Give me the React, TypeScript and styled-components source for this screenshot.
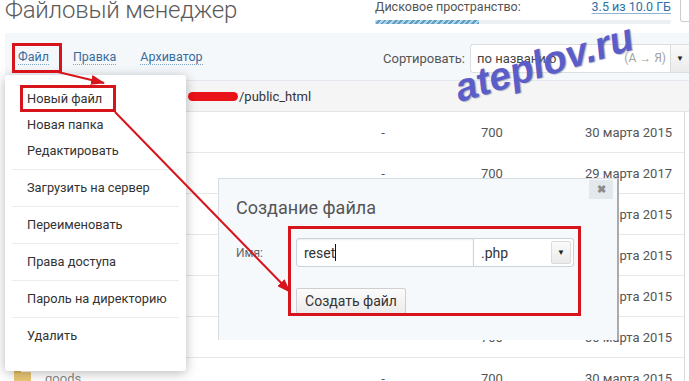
import React from 'react';
import styled, {createGlobalStyle} from 'styled-components';

const GlobalStyle = createGlobalStyle`
  html, body {
    margin: 0;
    padding: 0;
    background: #fff;
    overflow: hidden;
  }
  body {
    font-family: Roboto, 'Open Sans', 'Liberation Sans', sans-serif;
    color: #555;
  }
`;

const Page = styled.div`
  position: relative;
  width: 689px;
  height: 381px;
  padding-left: 5px;
  box-sizing: border-box;
  overflow: hidden;
`;

/* ---------- header ---------- */

const Header = styled.header`
  display: grid;
  grid-template-columns: 370px 296px 1fr;
  height: 33px;
`;

const Title = styled.h1`
  margin: 0;
  font-weight: 300;
  font-size: 24px;
  line-height: 20px;
  letter-spacing: -0.2px;
  color: #5a5a5a;
  white-space: nowrap;
`;

const Disk = styled.div`
  display: flex;
  flex-direction: column;
`;

const DiskLine = styled.div`
  display: flex;
  justify-content: space-between;
  font-size: 12.5px;
  line-height: 13px;
  color: #555;
`;

const DiskLink = styled.a`
  color: #2f6fa7;
  text-decoration: underline;
  text-underline-offset: 2px;
  text-decoration-color: #8fb3d3;
`;

const Bar = styled.div`
  margin-top: 7px;
  height: 4px;
  background: #edf0f2;
  border-radius: 2px;
  overflow: hidden;
`;

const BarFill = styled.div`
  height: 100%;
  background: repeating-linear-gradient(-45deg, #5f9fc6 0 2px, #b3d3e6 2px 4px);
`;

const SideBtn = styled.div`
  margin-left: 9px;
  width: 20px;
  height: 21px;
  border: 1px solid #ccc;
  border-top: none;
  border-radius: 0 0 3px 3px;
`;

/* ---------- toolbar ---------- */

const Toolbar = styled.nav`
  display: flex;
  align-items: center;
  gap: 24px;
  height: 47px;
  padding-left: 13px;
  background: #f4f8fb;
  border-bottom: 1px solid #e2e8ee;
`;

const MenuLink = styled.a`
  color: #3a6c9b;
  font-size: 12.5px;
  line-height: 15px;
  text-decoration: none;
  border-bottom: 1px dotted #7fa2c2;
`;

const SortWrap = styled.div`
  margin-left: auto;
  display: flex;
  align-items: center;
  gap: 5px;
  margin-top: 3px;
`;

const SortLabel = styled.span`
  font-size: 13px;
  color: #555;
`;

const SortSelect = styled.div`
  display: flex;
  align-items: center;
  width: 219px;
  height: 29px;
  box-sizing: border-box;
  padding-left: 6px;
  background: #fff;
  border: 1px solid #dcdfe2;
  border-right: none;
  border-radius: 3px 0 0 3px;
  font-size: 13px;
  color: #444;
`;

const SortHint = styled.span`
  margin-left: auto;
  margin-right: 4px;
  font-size: 12px;
  color: #a3a3a3;
`;

const CaretBtn = styled.span<{small?: boolean}>`
  display: flex;
  align-items: center;
  justify-content: center;
  width: 18px;
  height: ${({small}) => (small ? '21px' : '27px')};
  background: linear-gradient(#fafafa, #ebebeb);
  border-left: 1px solid #dcdcdc;
  border-radius: ${({small}) => (small ? '2px' : '0')};
  font-size: 8px;
  color: #222;
`;

/* ---------- path + table ---------- */

const PathRow = styled.div`
  display: flex;
  align-items: center;
  height: 30px;
  padding-left: 183px;
  background: #f5f5f5;
  border-bottom: 1px solid #e4e4e4;
  font-size: 13px;
  color: #333;
`;

const Censor = styled.span`
  display: inline-block;
  width: 50px;
  height: 9px;
  margin-right: 1px;
  border-radius: 5px;
  background: #ea1219;
`;

const Table = styled.div`
  margin-right: 4px;
  border-right: 1px solid #dadada;
`;

const Row = styled.div`
  display: grid;
  grid-template-columns: 335px 86px 140px 1fr;
  align-items: center;
  height: 40px;
  border-bottom: 1px solid #e8e8e8;
  font-size: 13px;
  color: #555;
`;

const NameCell = styled.div`
  display: flex;
  align-items: center;
  gap: 14px;
  padding-left: 9px;
  color: #888;
`;

const Folder = styled.span`
  position: relative;
  width: 17px;
  height: 13px;
  border-radius: 1px;
  background: #e9c774;

  &::before {
    content: '';
    position: absolute;
    top: -2px;
    left: 0;
    width: 7px;
    height: 3px;
    border-radius: 1px 1px 0 0;
    background: #e0b858;
  }
`;

const SizeCell = styled.div`
  text-align: center;
`;

const PermCell = styled.div`
  padding-left: 55px;
`;

const DateCell = styled.div`
  text-align: right;
  padding-right: 12px;
  white-space: nowrap;
`;

/* ---------- dropdown menu ---------- */

const Dropdown = styled.ul`
  position: absolute;
  left: 5px;
  top: 75px;
  width: 181px;
  margin: 0;
  padding: 11px 0 22px;
  list-style: none;
  background: #fff;
  border-radius: 3px;
  box-shadow: 0 2px 12px rgba(0, 0, 0, 0.28);
  z-index: 5;
`;

const DropItem = styled.li`
  height: 26px;
  line-height: 26px;
  padding-left: 22px;
  font-size: 12.8px;
  color: #333;
  white-space: nowrap;
`;

const DropSep = styled.li`
  height: 1px;
  margin: 5px 7px;
  background: #ececec;
`;

/* ---------- dialog ---------- */

const Dialog = styled.div`
  position: absolute;
  left: 218px;
  top: 178px;
  width: 401px;
  height: 162px;
  box-sizing: border-box;
  padding: 16px 17px;
  background: #f6f9fc;
  border: 1px solid #d8dde2;
  border-right: 2px solid #ababab;
  border-bottom: none;
  z-index: 4;
`;

const Close = styled.span`
  position: absolute;
  top: 1px;
  right: 4px;
  width: 24px;
  height: 19px;
  display: flex;
  align-items: center;
  justify-content: center;
  background: #e3e8ed;
  font-size: 11px;
  font-weight: bold;
  color: #8a8a8a;
`;

const DialogTitle = styled.h2`
  margin: 0;
  font-weight: 400;
  font-size: 18px;
  line-height: 26px;
  color: #555;
`;

const Form = styled.div`
  display: grid;
  grid-template-columns: 60px auto;
  row-gap: 21px;
  margin-top: 17px;
  align-items: center;
`;

const Label = styled.span`
  font-size: 12px;
  color: #666;
`;

const Fields = styled.div`
  display: flex;
`;

const Input = styled.div`
  display: flex;
  align-items: center;
  width: 178px;
  height: 29px;
  box-sizing: border-box;
  padding-left: 7px;
  background: #fff;
  border: 1px solid #c9d3dc;
  border-radius: 3px 0 0 3px;
  box-shadow: inset 0 1px 2px rgba(0, 0, 0, 0.08);
  font-size: 14px;
  color: #333;
`;

const Cursor = styled.span`
  display: inline-block;
  width: 1px;
  height: 17px;
  background: #111;
`;

const ExtSelect = styled.div`
  display: flex;
  align-items: center;
  justify-content: space-between;
  width: 100px;
  height: 29px;
  box-sizing: border-box;
  padding: 0 2px 0 7px;
  background: #fff;
  border: 1px solid #c9d3dc;
  border-left: none;
  border-radius: 0 3px 3px 0;
  font-size: 14px;
  color: #333;

  & > span:last-child {
    border: 1px solid #dcdcdc;
  }
`;

const Button = styled.button`
  grid-column: 2;
  justify-self: start;
  width: 110px;
  height: 26px;
  padding: 0;
  background: linear-gradient(#fbfbfb, #ececec);
  border: 1px solid #cfcfcf;
  border-radius: 2px;
  font-family: inherit;
  font-size: 14px;
  color: #333;
`;

/* ---------- overlays ---------- */

const Annotations = styled.svg`
  position: absolute;
  left: 0;
  top: 0;
  pointer-events: none;
  z-index: 10;
`;

const Watermark = styled.span`
  position: absolute;
  left: 452px;
  top: 41px;
  font-family: 'Liberation Sans', Arial, sans-serif;
  font-weight: bold;
  font-style: italic;
  font-size: 39px;
  line-height: 44px;
  color: #5b5ec8;
  text-shadow: 1px 1px 1px rgba(40, 40, 90, 0.35);
  transform: rotate(-17deg);
  white-space: nowrap;
  z-index: 8;
`;

const rows = [
  {name: '.cagefs', date: '30 марта 2015'},
  {name: '.cl.selector', date: '29 марта 2017'},
  {name: '.cpanel', date: '30 марта 2015'},
  {name: '.htpasswds', date: '30 марта 2015'},
  {name: 'etc', date: '30 марта 2015'},
  {name: 'logs', date: '30 марта 2015'},
  {name: 'goods', date: '30 марта 2015'},
];

const used = 3.5;
const total = 10;

export default function App() {
  return (
    <>
      <GlobalStyle />
      <Page>
        <Header>
          <Title>Файловый менеджер</Title>
          <Disk>
            <DiskLine>
              <span>Дисковое пространство:</span>
              <DiskLink>3.5 из 10.0 ГБ</DiskLink>
            </DiskLine>
            <Bar>
              <BarFill style={{width: `${(used / total) * 100}%`}} />
            </Bar>
          </Disk>
          <SideBtn />
        </Header>

        <Toolbar>
          <MenuLink>Файл</MenuLink>
          <MenuLink>Правка</MenuLink>
          <MenuLink>Архиватор</MenuLink>
          <SortWrap>
            <SortLabel>Сортировать:</SortLabel>
            <SortSelect>
              по названию
              <SortHint>(А → Я)</SortHint>
              <CaretBtn>▼</CaretBtn>
            </SortSelect>
          </SortWrap>
        </Toolbar>

        <PathRow>
          <Censor />
          /public_html
        </PathRow>

        <Table>
          {rows.map((r) => (
            <Row key={r.name}>
              <NameCell>
                <Folder />
                {r.name}
              </NameCell>
              <SizeCell>-</SizeCell>
              <PermCell>700</PermCell>
              <DateCell>{r.date}</DateCell>
            </Row>
          ))}
        </Table>

        <Dropdown>
          <DropItem>Новый файл</DropItem>
          <DropItem>Новая папка</DropItem>
          <DropItem>Редактировать</DropItem>
          <DropSep />
          <DropItem>Загрузить на сервер</DropItem>
          <DropSep />
          <DropItem>Переименовать</DropItem>
          <DropSep />
          <DropItem>Права доступа</DropItem>
          <DropSep />
          <DropItem>Пароль на директорию</DropItem>
          <DropSep />
          <DropItem>Удалить</DropItem>
        </Dropdown>

        <Dialog>
          <Close>✖</Close>
          <DialogTitle>Создание файла</DialogTitle>
          <Form>
            <Label>Имя:</Label>
            <Fields>
              <Input>
                reset
                <Cursor />
              </Input>
              <ExtSelect>
                .php
                <CaretBtn small>▼</CaretBtn>
              </ExtSelect>
            </Fields>
            <Button>Создать файл</Button>
          </Form>
        </Dialog>

        <Watermark>ateplov.ru</Watermark>

        <Annotations width="689" height="381" viewBox="0 0 689 381">
          <defs>
            <marker
              id="head"
              markerUnits="userSpaceOnUse"
              markerWidth="14"
              markerHeight="10"
              refX="13"
              refY="5"
              orient="auto">
              <path d="M0,0 L14,5 L0,10 z" fill="#d7141b" />
            </marker>
          </defs>
          <g fill="none" stroke="#d7141b" strokeWidth="3">
            <rect x="13.5" y="44.5" width="47" height="27" />
            <rect x="21.5" y="86.5" width="93" height="24" />
            <rect x="289.5" y="227.5" width="290" height="87" />
          </g>
          <g stroke="#d7141b" strokeWidth="2">
            <line x1="58" y1="72" x2="104" y2="83" markerEnd="url(#head)" />
            <line x1="115" y1="112" x2="290" y2="292" markerEnd="url(#head)" />
          </g>
        </Annotations>
      </Page>
    </>
  );
}
